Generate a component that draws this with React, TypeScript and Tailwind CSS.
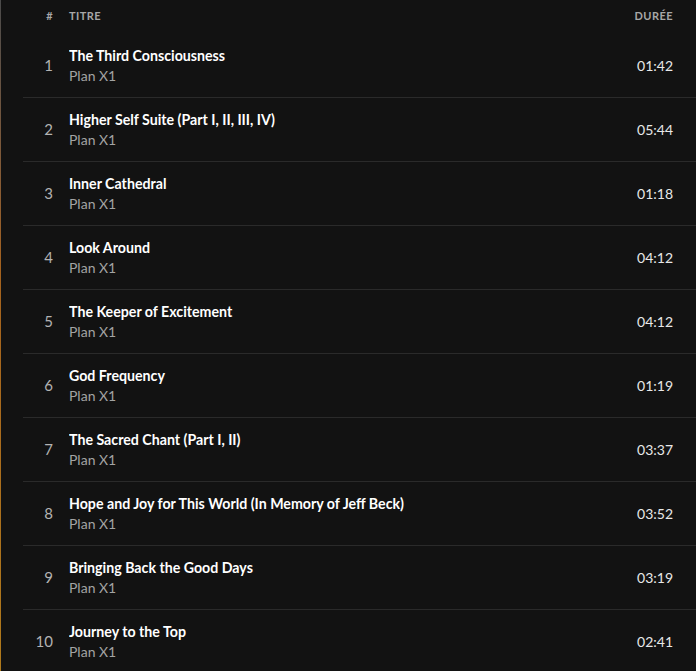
const tracks = [
  { title: 'The Third Consciousness', duration: '01:42' },
  { title: 'Higher Self Suite (Part I, II, III, IV)', duration: '05:44' },
  { title: 'Inner Cathedral', duration: '01:18' },
  { title: 'Look Around', duration: '04:12' },
  { title: 'The Keeper of Excitement', duration: '04:12' },
  { title: 'God Frequency', duration: '01:19' },
  { title: 'The Sacred Chant (Part I, II)', duration: '03:37' },
  { title: 'Hope and Joy for This World (In Memory of Jeff Beck)', duration: '03:52' },
  { title: 'Bringing Back the Good Days', duration: '03:19' },
  { title: 'Journey to the Top', duration: '02:41' },
];

export default function App() {
  return (
    <div
      className="flex w-[696px] h-[671px] overflow-hidden bg-[#121212] text-white"
      style={{ fontFamily: "Lato, 'Noto Sans', sans-serif" }}
    >
      {/* bord de l'image de fond */}
      <div className="w-px shrink-0 bg-linear-to-b from-[#4a4a4a] via-[#a4621e] via-40% to-[#b07a1c]" />

      <div className="flex-1 pl-[22px]">
        {/* en-tête */}
        <div className="flex items-center h-[33px] pb-px pr-[23px] text-[11px] font-bold tracking-[0.04em] uppercase text-[#a7a7a7]">
          <div className="w-[30px] text-right">#</div>
          <div className="flex-1 pl-[16px]">Titre</div>
          <div>Durée</div>
        </div>

        {/* liste des pistes */}
        {tracks.map((t, i) => (
          <div
            key={i}
            className={
              i === 0
                ? 'flex items-center h-[64px] pr-[23px] border-t border-transparent'
                : 'flex items-center h-[64px] pr-[23px] border-t border-[#2a2a2a]'
            }
          >
            <div className="w-[30px] text-right text-[15px] text-[#b3b3b3] tabular-nums">{i + 1}</div>
            <div className="flex-1 pl-[16px] min-w-0">
              <div className="text-[14.2px] font-bold leading-[20px] text-white truncate">{t.title}</div>
              <div className="text-[14px] leading-[20px] text-[#a3a3a3]">Plan X1</div>
            </div>
            <div className="text-[14px] text-[#e8e8e8] tabular-nums">{t.duration}</div>
          </div>
        ))}
      </div>
    </div>
  );
}
